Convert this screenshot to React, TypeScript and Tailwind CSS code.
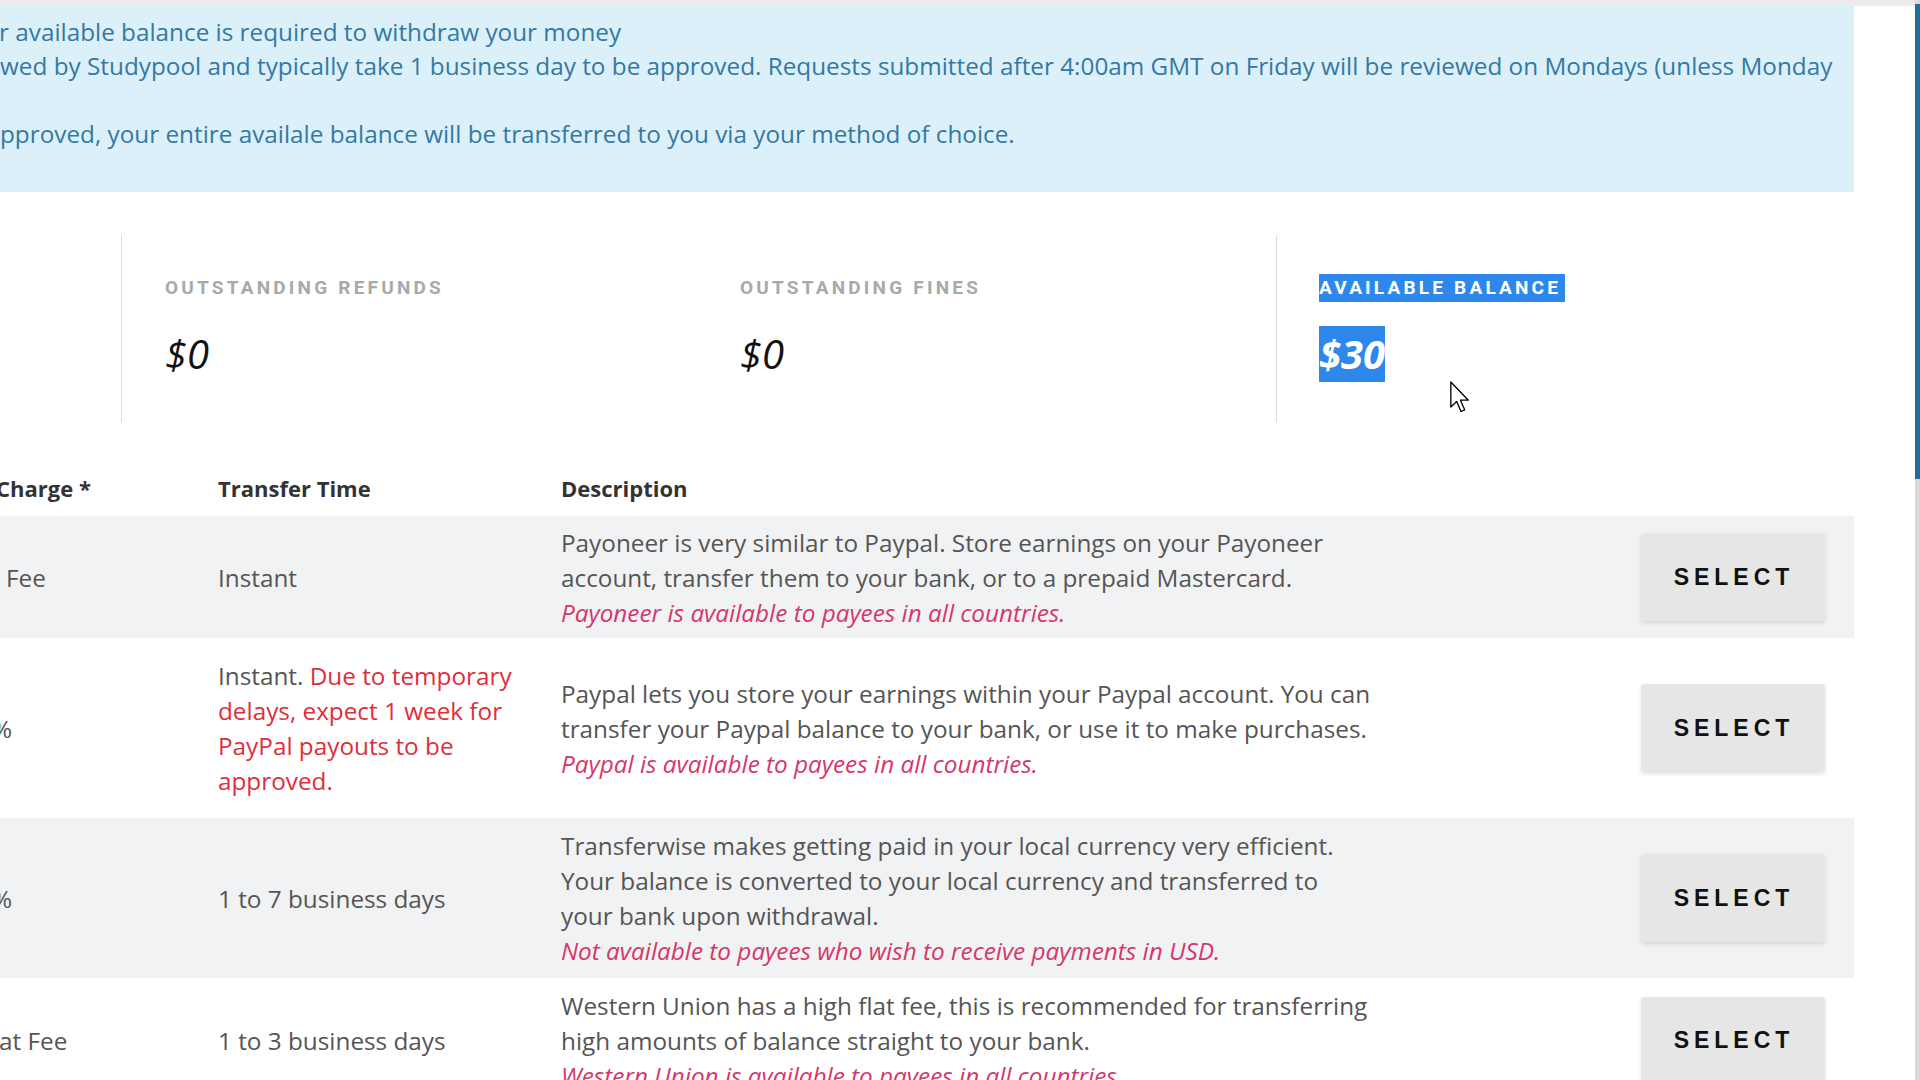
import React from 'react';

interface StatProps {
  label: string;
  amount: string;
  highlighted?: boolean;
  className?: string;
}

const Stat: React.FC<StatProps> = ({ label, amount, highlighted = false, className = '' }) => {
  const selected = highlighted ? 'bg-[#2e88ec] text-white' : '';
  return (
    <div className={`flex flex-col gap-[24px] pt-[39px] ${className}`}>
      <div className="flex">
        <span
          className={`h-[28px] leading-[28px] text-[19px] font-bold tracking-[3.2px] font-['Roboto',sans-serif] ${
            highlighted ? 'bg-[#2e88ec] text-white pr-[4px]' : 'text-[#a9a9a9]'
          }`}
        >
          {label}
        </span>
      </div>
      <div className="flex">
        <span
          className={`h-[56px] leading-[56px] text-[40px] italic ${
            highlighted ? 'font-bold' : 'font-normal text-[#111]'
          } ${selected}`}
        >
          {amount}
        </span>
      </div>
    </div>
  );
};

interface RowData {
  charge: React.ReactNode;
  time: React.ReactNode;
  desc: string[];
  note: string;
  height: string;
  striped: boolean;
}

const rows: RowData[] = [
  {
    charge: <span className="ml-[6px]">Fee</span>,
    time: <span>Instant</span>,
    desc: [
      'Payoneer is very similar to Paypal. Store earnings on your Payoneer',
      'account, transfer them to your bank, or to a prepaid Mastercard.',
    ],
    note: 'Payoneer is available to payees in all countries.',
    height: 'h-[122px]',
    striped: true,
  },
  {
    charge: <span className="ml-[-8px]">%</span>,
    time: (
      <div className="flex flex-col">
        <span>
          Instant. <span className="text-[#df2e3c]">Due to temporary</span>
        </span>
        <span className="text-[#df2e3c]">delays, expect 1 week for</span>
        <span className="text-[#df2e3c]">PayPal payouts to be</span>
        <span className="text-[#df2e3c]">approved.</span>
      </div>
    ),
    desc: [
      'Paypal lets you store your earnings within your Paypal account. You can',
      'transfer your Paypal balance to your bank, or use it to make purchases.',
    ],
    note: 'Paypal is available to payees in all countries.',
    height: 'h-[180px]',
    striped: false,
  },
  {
    charge: <span className="ml-[-8px]">%</span>,
    time: <span>1 to 7 business days</span>,
    desc: [
      'Transferwise makes getting paid in your local currency very efficient.',
      'Your balance is converted to your local currency and transferred to',
      'your bank upon withdrawal.',
    ],
    note: 'Not available to payees who wish to receive payments in USD.',
    height: 'h-[160px]',
    striped: true,
  },
  {
    charge: <span className="ml-[-1px]">at Fee</span>,
    time: <span>1 to 3 business days</span>,
    desc: [
      'Western Union has a high flat fee, this is recommended for transferring',
      'high amounts of balance straight to your bank.',
    ],
    note: 'Western Union is available to payees in all countries.',
    height: 'h-[125px]',
    striped: false,
  },
];

export default function App() {
  return (
    <div className="relative flex w-full h-[1080px] overflow-hidden bg-white font-['Open_Sans',sans-serif] text-[24.3px] text-[#555]">
      <div className="flex flex-col flex-1 min-w-0">
        {/* Header shadow */}
        <div className="h-[6px] w-full shrink-0 bg-[#ececec]" />

        <div className="flex flex-col w-[1854px]">
          {/* Info alert */}
          <div className="flex flex-col h-[186px] shrink-0 pt-[9px] bg-[#dcf0fa] text-[#3479a3] leading-[34px] whitespace-nowrap">
            <span className="ml-[-1px]">r available balance is required to withdraw your money</span>
            <span>
              wed by Studypool and typically take 1 business day to be approved. Requests submitted after 4:00am GMT on
              Friday will be reviewed on Mondays (unless Monday
            </span>
            <span>&nbsp;</span>
            <span>pproved, your entire availale balance will be transferred to you via your method of choice.</span>
          </div>

          {/* Balances */}
          <div className="flex mt-[43px] h-[187px] shrink-0">
            <div className="w-[122px] border-r border-[#dcdcdc]" />
            <Stat label="OUTSTANDING REFUNDS" amount="$0" className="w-[575px] pl-[43px]" />
            <Stat label="OUTSTANDING FINES" amount="$0" className="w-[580px] pl-[43px] border-r border-[#dcdcdc]" />
            <Stat label="AVAILABLE BALANCE" amount="$30" highlighted className="flex-1 pl-[42px]" />
          </div>

          {/* Methods table */}
          <div className="flex flex-col">
            <div className="grid grid-cols-[218px_343px_1080px_213px] h-[94px] shrink-0 items-end pb-[10px] leading-[35px] font-bold text-[22px] text-[#333]">
              <span className="ml-[-4px]">Charge *</span>
              <span>Transfer Time</span>
              <span>Description</span>
              <span />
            </div>

            {rows.map((row, i) => (
              <div
                key={i}
                className={`grid grid-cols-[218px_343px_1080px_213px] shrink-0 items-center leading-[35px] ${row.height} ${
                  row.striped ? 'bg-[#f1f2f3]' : 'bg-white'
                }`}
              >
                <div className="whitespace-nowrap">{row.charge}</div>
                <div className="whitespace-nowrap">{row.time}</div>
                <div className="flex flex-col whitespace-nowrap">
                  {row.desc.map((line) => (
                    <span key={line}>{line}</span>
                  ))}
                  <span className="italic text-[#d4386a]">{row.note}</span>
                </div>
                <div className="flex">
                  <button className="w-[184px] h-[88px] rounded-[3px] bg-[#e6e6e6] shadow-[0_2px_4px_rgba(0,0,0,0.12)] font-['Liberation_Sans',Arial,sans-serif] font-bold text-[23px] tracking-[5px] pl-[2px] text-[#111]">
                    SELECT
                  </button>
                </div>
              </div>
            ))}
          </div>
        </div>
      </div>

      {/* Scrollbar */}
      <div className="flex flex-col w-[5px] bg-[#d9d9d9]">
        <div className="h-[475px] mt-[4px] bg-[#1c6f98]" />
      </div>

      {/* Mouse pointer */}
      <svg className="absolute left-[1450px] top-[381px]" width="20" height="32" viewBox="0 0 12 19">
        <path
          d="M0.5 0.5 L0.5 15.5 L4 12.2 L6.6 18.2 L8.8 17.2 L6.3 11.4 L11 11.4 Z"
          fill="#fff"
          stroke="#000"
          strokeWidth="0.8"
          strokeLinejoin="round"
        />
      </svg>
    </div>
  );
}
